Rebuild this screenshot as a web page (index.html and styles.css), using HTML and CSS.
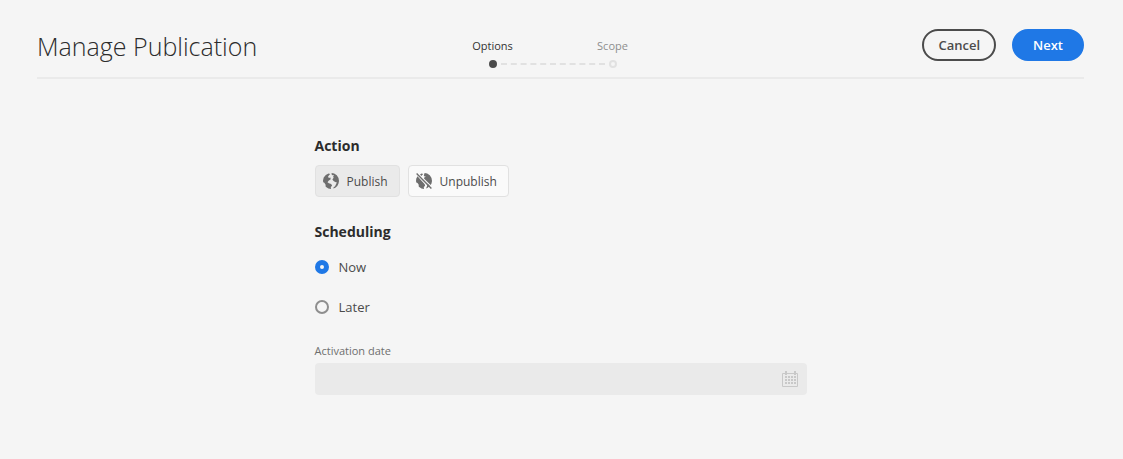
FILE: index.html
```html
<!DOCTYPE html>
<html lang="en">
<head>
<meta charset="utf-8">
<title>Manage Publication</title>
<meta name="viewport" content="width=device-width, initial-scale=1">
<link rel="stylesheet" href="styles.css">
</head>
<body>
<header class="header">
  <h1 class="title">Manage Publication</h1>
  <div class="steps">
    <ol class="step-labels">
      <li class="step step-current" aria-current="step">Options</li>
      <li class="step">Scope</li>
    </ol>
    <div class="track" aria-hidden="true">
      <span class="dot dot-current"></span>
      <span class="line"></span>
      <span class="dot"></span>
    </div>
  </div>
  <div class="actions">
    <button class="button" type="button">Cancel</button>
    <button class="button button-primary" type="button">Next</button>
  </div>
</header>
<main class="content">
  <section class="section">
    <h2 class="heading">Action</h2>
    <div class="choices">
      <button class="choice choice-selected" type="button" aria-pressed="true">
        <svg class="choice-icon" viewBox="0 0 16 16" aria-hidden="true">
          <path d="M5.500.5 7.200 1 6 2.300l-1 1.400.9 1.400L7.400 4.600l.3 1.600-2.100 1.600L4.500 9.300l1.400.9 2.200.8 1 1.400-1.300 1.800.2 1.700-2.600-.5-2.700-1.700-.2-2.300L1.300 9.700.2 9.200 0 7.500l.7-3L2.800 2z"/>
          <path d="m8.600 0 2.600.5 2.600 1.800L15.500 5 16 8l-.5 2.500-1.200 2.600-2 1.700-1.800.7-.2-.7 1.900-1.700.9-2 .8-1.600-1.700-.4-1.600-1-1.200-1.700 1.200-1.600-.4-1.500.9-1.300-1.600.3-.9-.9z"/>
        </svg>
        Publish
      </button>
      <button class="choice" type="button" aria-pressed="false">
        <svg class="choice-icon" viewBox="0 0 16 16" aria-hidden="true">
          <path d="M1.500 3.300.3 5.600 0 8l.3 1.400 1.200.5 1.100 1.700.2 2.200 2.700 1.700 2.500.5-.2-1.700 1.300-1.800-.4-1.200zM4 1.500 5.500.5 7.200 1 6 2.300l-.5.7zM8.600 0l2.600.5 2.600 1.800L15.500 5 16 8l-.5 2.500-.9 1.600L8 5.500l.5-1.300 1.600-1-1.600.3-.7-1.100zM11.500 10.500l2.200 2.200-1.900 2-1.800.7 1-2.100z"/>
          <path class="slash" d="m.6.6 14.800 14.800"/>
        </svg>
        Unpublish
      </button>
    </div>
  </section>
  <section class="section section-last">
    <h2 class="heading">Scheduling</h2>
    <label class="option"><input class="radio" type="radio" name="schedule" checked>Now</label>
    <label class="option"><input class="radio" type="radio" name="schedule">Later</label>
  </section>
  <div class="field">
    <label class="field-label" for="activation">Activation date</label>
    <div class="field-box">
      <input class="field-input" id="activation" type="text" disabled>
      <svg class="calendar" viewBox="0 0 18 18" aria-hidden="true">
        <path class="calendar-frame" d="M1.500 3.500h15v13h-15z"/>
        <path d="M4 1h2v4H4zM13 1h2v4h-2zM4 6h2v2H4zM7 6h2v2H7zM10 6h2v2h-2zM13 6h2v2h-2zM4 9h2v2H4zM7 9h2v2H7zM10 9h2v2h-2zM13 9h2v2h-2zM4 12h2v2H4zM7 12h2v2H7zM10 12h2v2h-2zM13 12h2v2h-2z"/>
      </svg>
    </div>
  </div>
</main>
</body>
</html>
```

FILE: styles.css
```css
* {
  box-sizing: border-box;
}

body {
  margin: 0;
  padding: 0 39px 0 37px;
  background: #f5f5f5;
  color: #4b4b4b;
  font: 13px/20px "Open Sans", "Noto Sans", sans-serif;
}

button {
  font-family: inherit;
  cursor: pointer;
}

.header {
  display: grid;
  grid-template-columns: 1fr auto 1fr;
  align-items: start;
  padding: 26px 0 5px;
  border-bottom: 2px solid #eaeaea;
}

.title {
  margin: 0;
  color: #2c2c2c;
  font-size: 25px;
  font-weight: 300;
  line-height: 40px;
}

.steps {
  padding: 10px 16px 0 0;
}

.step-labels {
  display: grid;
  grid-template-columns: 120px 120px;
  margin: 0;
  padding: 0;
  list-style: none;
}

.step {
  color: #8e8e8e;
  font-size: 11px;
  line-height: 20px;
  text-align: center;
}

.step-current {
  color: #323232;
}

.track {
  display: flex;
  align-items: center;
  gap: 4px;
  padding: 4px 56px;
}

.dot {
  width: 8px;
  height: 8px;
  border: 2px solid #e1e1e1;
  border-radius: 50%;
}

.dot-current {
  border-color: #4b4b4b;
  background: #4b4b4b;
}

.line {
  flex: 1;
  border-top: 2px dashed #e1e1e1;
}

.actions {
  display: flex;
  justify-content: flex-end;
  gap: 16px;
  padding-top: 3px;
}

.button {
  height: 32px;
  padding: 0 14px;
  border: 2px solid #4b4b4b;
  border-radius: 16px;
  background: transparent;
  color: #4b4b4b;
  font-size: 13px;
  font-weight: 600;
}

.button-primary {
  padding: 0 19px;
  border-color: #1f78e6;
  background: #1f78e6;
  color: #fff;
}

.content {
  max-width: 492px;
  margin: 0 auto;
  padding-top: 57px;
}

.section {
  margin-bottom: 25px;
}

.section-last {
  margin-bottom: 14px;
}

.heading {
  margin: 0 0 9px;
  color: #2c2c2c;
  font-size: 14px;
  font-weight: 700;
  line-height: 20px;
}

.choices {
  display: flex;
  gap: 8px;
}

.choice {
  display: flex;
  align-items: center;
  gap: 8px;
  height: 32px;
  padding: 0 11px 0 7px;
  border: 1px solid #e1e1e1;
  border-radius: 4px;
  background: #fafafa;
  color: #4b4b4b;
  font-size: 12px;
}

.choice-selected {
  background: #eaeaea;
}

.choice-icon {
  width: 16px;
  height: 16px;
  fill: #6e6e6e;
}

.slash {
  fill: none;
  stroke: #6e6e6e;
  stroke-width: 1.4;
}

.option {
  display: flex;
  align-items: center;
  gap: 10px;
  height: 40px;
  font-size: 13px;
}

.heading + .option {
  margin-top: -4px;
}

.radio {
  appearance: none;
  width: 14px;
  height: 14px;
  margin: 0;
  border: 2px solid #8e8e8e;
  border-radius: 50%;
  background: #f5f5f5;
}

.radio:checked {
  border: 5px solid #1f78e6;
}

.field-label {
  display: block;
  margin-bottom: 2px;
  color: #6e6e6e;
  font-size: 11px;
  line-height: 20px;
}

.field-box {
  display: flex;
  align-items: center;
  height: 32px;
  padding-right: 8px;
  border-radius: 4px;
  background: #eaeaea;
}

.field-input {
  flex: 1;
  height: 100%;
  padding: 0 12px;
  border: 0;
  background: transparent;
}

.calendar {
  width: 18px;
  height: 18px;
  fill: #c8c8c8;
}

.calendar-frame {
  fill: none;
  stroke: #c8c8c8;
}
```
